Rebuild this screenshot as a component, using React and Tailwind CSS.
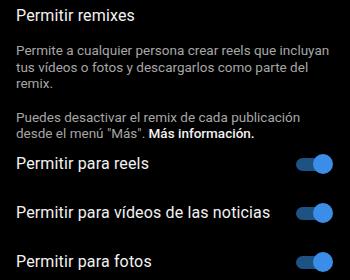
import { useState } from 'react'

const rows = [
  'Permitir para reels',
  'Permitir para vídeos de las noticias',
  'Permitir para fotos',
]

const Toggle = ({ on, onClick }) => (
  <button
    onClick={onClick}
    className="relative flex h-[20px] w-[37px] shrink-0 items-center"
  >
    <span
      className={`h-[13px] w-[30px] rounded-full ${on ? 'bg-[#1d5283]' : 'bg-[#555]'}`}
    ></span>
    <span
      className={`absolute top-0 h-[20px] w-[20px] rounded-full ${on ? 'left-[17px] bg-[#3b8ee8]' : 'left-0 bg-[#ccc]'}`}
    ></span>
  </button>
)

export default function App() {
  const [state, setState] = useState([true, true, true])

  return (
    <div
      className="h-[280px] w-[350px] overflow-hidden bg-black pl-4 text-[#f2f2f2]"
      style={{ fontFamily: 'Roboto, "Liberation Sans", sans-serif' }}
    >
      <div className="pt-[6px] text-[16px] leading-[20px] tracking-[0.15px]">
        Permitir remixes
      </div>

      <p className="mt-[16px] w-[319px] text-[13.5px] leading-[16.5px] text-[#a6a6a6]">
        Permite a cualquier persona crear reels que incluyan tus vídeos o fotos
        y descargarlos como parte del remix.
      </p>
      <p className="mt-[17px] w-[319px] text-[13.5px] leading-[16.5px] text-[#a6a6a6]">
        Puedes desactivar el remix de cada publicación desde el menú "Más".{' '}
        <span className="font-medium text-[#f2f2f2]">Más información.</span>
      </p>

      <ul className="mt-[-2px]">
        {rows.map((label, index) => (
          <li
            key={label}
            className="flex h-[49px] items-center justify-between pr-[17px]"
          >
            <span className="text-[16px] tracking-[0.15px]">{label}</span>
            <Toggle
              on={state[index]}
              onClick={() =>
                setState(state.map((v, i) => (i === index ? !v : v)))
              }
            />
          </li>
        ))}
      </ul>
    </div>
  )
}
